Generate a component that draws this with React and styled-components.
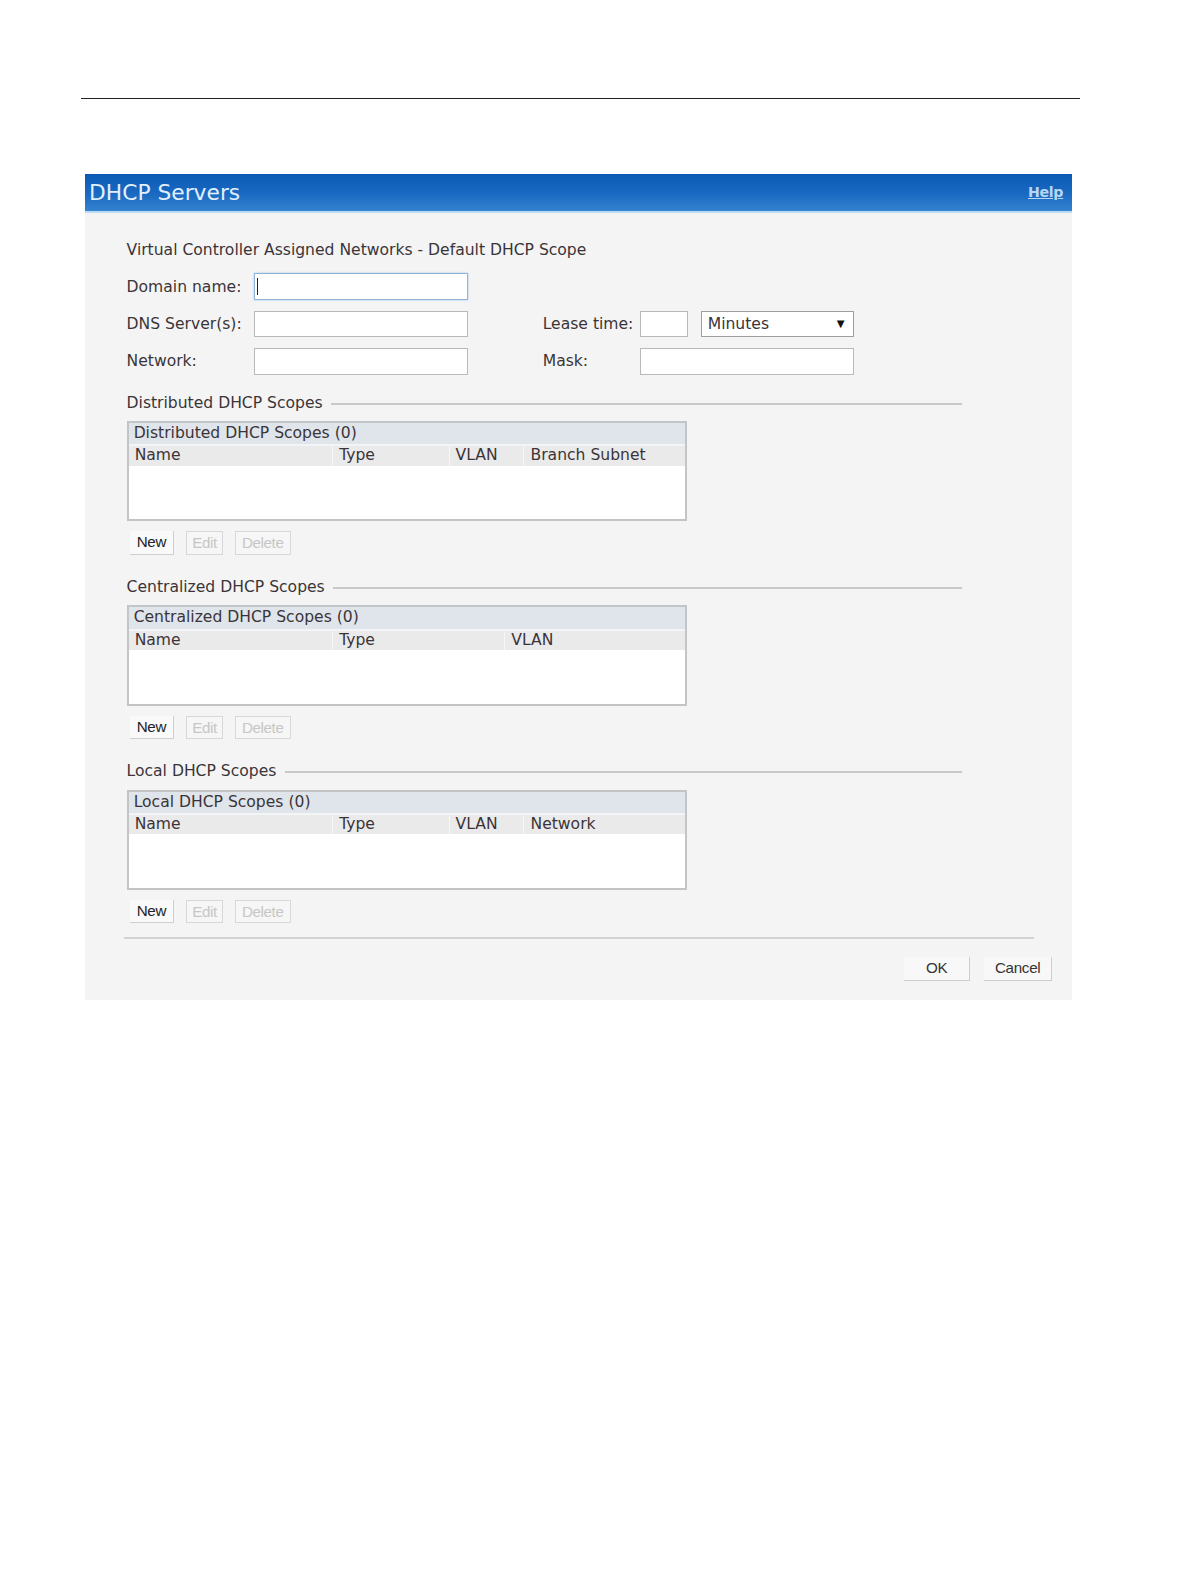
import React from "react";
import styled, { createGlobalStyle } from "styled-components";

const GlobalStyle = createGlobalStyle`
    html, body {
        margin: 0;
        background: #ffffff;
        font-family: "DejaVu Sans", Verdana, sans-serif;
    }
`;

const Page = styled.div`
    width: 1176px;
    padding-bottom: 40px;
    background: #ffffff;
    zoom: 1.0126;
`;

const TopRule = styled.div`
    margin-left: 80px;
    width: 987px;
    height: 97px;
    border-bottom: 1px solid #222;
`;

const Panel = styled.div`
    margin: 74px 0 0 84px;
    width: 975px;
    background: #f4f4f4;
`;

const TitleBar = styled.div`
    height: 38px;
    display: flex;
    align-items: center;
    justify-content: space-between;
    padding: 0 9px 0 4px;
    background: linear-gradient(180deg, #0a5ab5 0%, #1a6ac2 55%, #3482d0 100%);
    border-bottom: 2px solid #b9dcf4;
    box-sizing: border-box;
`;

const Title = styled.div`
    font-size: 21.5px;
    color: #e2efff;
`;

const HelpLink = styled.a`
    font-size: 14px;
    font-weight: bold;
    color: #b7d6f4;
    text-decoration: underline;
    letter-spacing: -0.3px;
`;

const Body = styled.div`
    padding: 27px 20px 19px 41px;
    color: #3a3438;
    font-size: 15.4px;
`;

const Heading = styled.div`
    height: 20px;
    line-height: 20px;
`;

const Form = styled.div`
    margin-top: 13px;
    display: flex;
    flex-direction: column;
    gap: 11px;
`;

const Row = styled.div`
    display: flex;
    align-items: center;
    height: 26px;
`;

const Label = styled.div`
    width: ${({ w }) => w}px;
    flex-shrink: 0;
    margin-left: ${({ ml }) => ml || 0}px;
`;

const TextBox = styled.div`
    width: ${({ w }) => w}px;
    height: 26px;
    box-sizing: border-box;
    background: #ffffff;
    border: 1px solid ${({ focused }) => (focused ? "#8fb3d9" : "#b9b9b9")};
    box-shadow: ${({ focused }) => (focused ? "0 0 2px #a9c8ea" : "none")};
    margin-left: ${({ ml }) => ml || 0}px;
    display: flex;
    align-items: center;
    padding-left: 2px;
`;

const Caret = styled.span`
    width: 1px;
    height: 16px;
    background: #222;
`;

const Select = styled.div`
    width: 151px;
    height: 26px;
    box-sizing: border-box;
    margin-left: 13px;
    background: #ffffff;
    border: 1px solid #9e9e9e;
    display: flex;
    align-items: center;
    justify-content: space-between;
    padding: 0 8px 0 6px;
`;

const Arrow = styled.span`
    font-size: 10px;
    color: #111;
`;

const SectionHeader = styled.div`
    width: 825px;
    height: 20px;
    margin-top: ${({ mt }) => mt}px;
    display: flex;
    align-items: center;
    gap: 8px;
    &::after {
        content: "";
        flex: 1;
        height: 0;
        border-top: 2px solid #c9c9c9;
        margin-top: 2px;
    }
`;

const Table = styled.div`
    margin-top: 8px;
    width: 553px;
    height: 99px;
    box-sizing: border-box;
    border: 2px solid #c2c4c6;
    background: #ffffff;
    display: flex;
    flex-direction: column;
`;

const TableTitle = styled.div`
    height: 21px;
    line-height: 21px;
    padding-left: 5px;
    background: #dfe5ea;
    border-bottom: 2px solid #f2f4f6;
`;

const HeaderRow = styled.div`
    height: 19px;
    line-height: 19px;
    background: #ebeaea;
    display: flex;
`;

const HeaderCell = styled.div`
    width: ${({ w }) => w}px;
    padding-left: 6px;
    box-sizing: border-box;
    border-right: 1px solid #f6f6f6;
    &:last-child {
        border-right: none;
        flex: 1;
    }
`;

const ButtonRow = styled.div`
    margin-top: 10px;
    display: flex;
    gap: 12px;
    padding-left: 3px;
`;

const SmallButton = styled.div`
    width: ${({ w }) => w}px;
    height: 23px;
    line-height: 21px;
    box-sizing: border-box;
    text-align: center;
    font-family: "Liberation Sans", Arial, sans-serif;
    font-size: 15px;
    letter-spacing: -0.4px;
    ${({ disabled }) =>
        disabled
            ? `color: #c6c6c6; border: 1px solid #d8d8d8; background: #f6f6f6;`
            : `color: #222; border-right: 1px solid #cfcfcf; border-bottom: 1px solid #cfcfcf; background: #f9f9f9;`}
`;

const Separator = styled.div`
    margin: 14px 0 0 -3px;
    width: 899px;
    border-top: 2px solid #d2d2d2;
`;

const Footer = styled.div`
    margin-top: 17px;
    display: flex;
    justify-content: flex-end;
    gap: 14px;
`;

const DialogButton = styled.div`
    width: ${({ w }) => w}px;
    height: 24px;
    line-height: 22px;
    box-sizing: border-box;
    text-align: center;
    font-family: "Liberation Sans", Arial, sans-serif;
    font-size: 15px;
    letter-spacing: -0.3px;
    color: #333;
    background: #f8f8f8;
    border-right: 1px solid #cdcdcd;
    border-bottom: 1px solid #cdcdcd;
`;

const sections = [
    {
        name: "Distributed DHCP Scopes",
        columns: [
            ["Name", 202],
            ["Type", 115],
            ["VLAN", 74],
            ["Branch Subnet", 0],
        ],
    },
    {
        name: "Centralized DHCP Scopes",
        columns: [
            ["Name", 202],
            ["Type", 170],
            ["VLAN", 0],
        ],
    },
    {
        name: "Local DHCP Scopes",
        columns: [
            ["Name", 202],
            ["Type", 115],
            ["VLAN", 74],
            ["Network", 0],
        ],
    },
];

function ScopeSection({ section, first }) {
    return (
        <>
            <SectionHeader mt={first ? 18 : 22}>{section.name}</SectionHeader>
            <Table>
                <TableTitle>{section.name} (0)</TableTitle>
                <HeaderRow>
                    {section.columns.map(([label, w]) => (
                        <HeaderCell key={label} w={w}>
                            {label}
                        </HeaderCell>
                    ))}
                </HeaderRow>
            </Table>
            <ButtonRow>
                <SmallButton w={44}>New</SmallButton>
                <SmallButton w={36} disabled>
                    Edit
                </SmallButton>
                <SmallButton w={55} disabled>
                    Delete
                </SmallButton>
            </ButtonRow>
        </>
    );
}

export default function App() {
    return (
        <Page>
            <GlobalStyle />
            <TopRule />
            <Panel>
                <TitleBar>
                    <Title>DHCP Servers</Title>
                    <HelpLink>Help</HelpLink>
                </TitleBar>
                <Body>
                    <Heading>Virtual Controller Assigned Networks - Default DHCP Scope</Heading>
                    <Form>
                        <Row>
                            <Label w={126}>Domain name:</Label>
                            <TextBox w={211} focused>
                                <Caret />
                            </TextBox>
                        </Row>
                        <Row>
                            <Label w={126}>DNS Server(s):</Label>
                            <TextBox w={211} />
                            <Label w={96} ml={74}>
                                Lease time:
                            </Label>
                            <TextBox w={47} />
                            <Select>
                                <span>Minutes</span>
                                <Arrow>▼</Arrow>
                            </Select>
                        </Row>
                        <Row>
                            <Label w={126}>Network:</Label>
                            <TextBox w={211} />
                            <Label w={96} ml={74}>
                                Mask:
                            </Label>
                            <TextBox w={211} />
                        </Row>
                    </Form>
                    {sections.map((s, i) => (
                        <ScopeSection key={s.name} section={s} first={i === 0} />
                    ))}
                    <Separator />
                    <Footer>
                        <DialogButton w={65}>OK</DialogButton>
                        <DialogButton w={67}>Cancel</DialogButton>
                    </Footer>
                </Body>
            </Panel>
        </Page>
    );
}
